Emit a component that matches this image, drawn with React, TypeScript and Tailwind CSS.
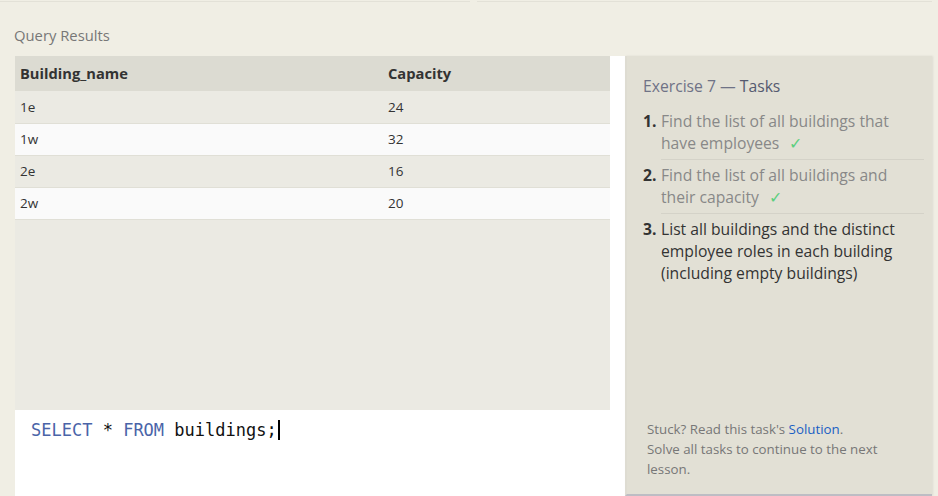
const rows = [
  { name: "1e", capacity: 24 },
  { name: "1w", capacity: 32 },
  { name: "2e", capacity: 16 },
  { name: "2w", capacity: 20 },
];

const tasks = [
  { text: "Find the list of all buildings that have employees", done: true },
  { text: "Find the list of all buildings and their capacity", done: true },
  {
    text: "List all buildings and the distinct employee roles in each building (including empty buildings)",
    done: false,
  },
];

export default function App() {
  return (
    <div className="w-[938px] h-[496px] overflow-hidden bg-[#f0eee4] flex flex-col font-['Open_Sans',sans-serif]">
      {/* bottoms of the panels above */}
      <div className="flex h-[2px] gap-[7px]">
        <div className="w-[470px] border-b border-[#e3e1d7]" />
        <div className="w-[455px] border-b border-[#e3e1d7]" />
      </div>

      <h2 className="pl-[14px] pt-[23px] pb-[11px] text-[14.8px] leading-[20px] text-[#777777]">
        Query Results
      </h2>

      <div className="flex flex-1 pl-[15px] pr-[6px]">
        <div className="w-[610px] flex flex-col">
          {/* results */}
          <div className="h-[354px] flex bg-white">
            <div className="w-[595px] bg-[#ebeae3]">
              <table className="w-full text-left border-collapse">
                <thead>
                  <tr className="bg-[#dcdbd2] h-[35px] text-[14.7px] font-bold text-[#333333]">
                    <th className="pl-[5px] w-[373px]">Building_name</th>
                    <th>Capacity</th>
                  </tr>
                </thead>
                <tbody className="text-[13.5px] text-[#333333]">
                  {rows.map((r, i) => (
                    <tr
                      key={r.name}
                      className={`h-[32px] border-b border-[#e0dfd6] ${
                        i % 2 === 0 ? "bg-[#ebeae3]" : "bg-[#fafafa]"
                      }`}
                    >
                      <td className="pl-[5px]">{r.name}</td>
                      <td>{r.capacity}</td>
                    </tr>
                  ))}
                </tbody>
              </table>
            </div>
          </div>

          {/* editor */}
          <div className="flex-1 bg-white pl-[16px] pt-[8px] font-['DejaVu_Sans_Mono',monospace] text-[17px] leading-[24px] text-[#111111]">
            <span className="text-[#4a64a8]">SELECT</span> * <span className="text-[#4a64a8]">FROM</span> buildings;<span className="inline-block w-[2px] h-[20px] ml-[1px] bg-black align-[-4px]" />
          </div>
        </div>

        {/* tasks panel */}
        <div className="w-[307px] bg-[#e2e0d5] border-l-2 border-[#dedcd2] border-b-2 border-b-[#bdbdc4] shadow-[1px_0_2px_rgba(0,0,0,0.08)] flex flex-col pl-[16px] pr-[8px] pt-[19px]">
          <h3 className="text-[15.7px] leading-[22px] text-[#6f7286]">
            Exercise 7 — <span className="text-[#555a70]">Tasks</span>
          </h3>
          <ol className="mt-[13px] text-[15.7px] leading-[22px]">
            {tasks.map((t, i) => (
              <li key={i} className="flex">
                <span className="w-[18px] shrink-0 font-bold text-[#333333]">{i + 1}.</span>
                <div
                  className={`flex-1 ${i < tasks.length - 1 ? "border-b border-[#d4d2c8] pb-[5px] mb-[4px]" : ""} ${
                    t.done ? "text-[#888888]" : "text-[#333333]"
                  }`}
                >
                  {t.text}
                  {t.done && <span className="ml-[10px] text-[#5ccf7f]">✓</span>}
                </div>
              </li>
            ))}
          </ol>
          <div className="mt-auto pl-[4px] pr-[20px] pb-[15px] text-[13.3px] leading-[20px] text-[#777777]">
            <p>
              Stuck? Read this task's <span className="text-[#1a5fc4]">Solution</span>.
            </p>
            <p>Solve all tasks to continue to the next lesson.</p>
          </div>
        </div>
      </div>
    </div>
  );
}
